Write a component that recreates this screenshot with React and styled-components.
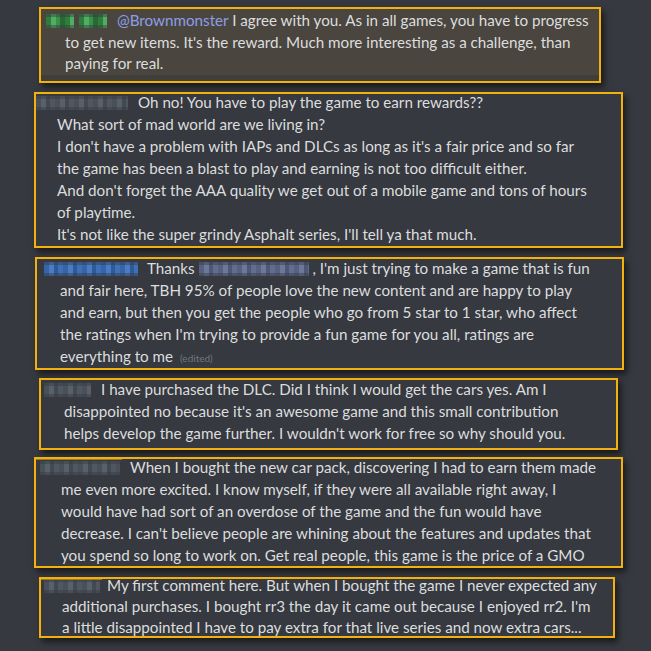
import React from "react";
import styled, { createGlobalStyle } from "styled-components";

const GlobalStyle = createGlobalStyle`
  html, body {
    margin: 0;
    padding: 0;
    background: #36393f;
  }
  body {
    font-family: Lato, "Open Sans", "Noto Sans", sans-serif;
    color: #dcddde;
  }
`;

const Page = styled.div`
  width: 651px;
  height: 651px;
  overflow: hidden;
  background: #36393f;
  display: flex;
  flex-direction: column;
  align-items: flex-start;
`;

const Card = styled.div`
  position: relative;
  box-sizing: border-box;
  margin-top: ${(p) => p.$top}px;
  margin-left: ${(p) => p.$left}px;
  width: ${(p) => p.$width}px;
  height: ${(p) => p.$height}px;
  padding: 0 0 0 ${(p) => p.$pad}px;
  border: 2px solid #f2b10c;
  background: ${(p) => (p.$warm ? "#4a463f" : "#36393f")};
  box-shadow: 3px 4px 6px rgba(0, 0, 0, 0.55);
  overflow: hidden;

  ${(p) =>
    p.$bar &&
    `
    &::before {
      content: "";
      position: absolute;
      left: -1px;
      top: -2px;
      width: ${p.$bar}px;
      height: 3px;
      background: #9c7c1e;
    }
  `}

  ${(p) =>
    p.$warm &&
    `
    &::after {
      content: "";
      position: absolute;
      left: 0;
      right: 0;
      bottom: 0;
      height: 6px;
      background: #403e3a;
    }
  `}
`;

const Body = styled.div`
  margin-top: ${(p) => p.$shift || 0}px;
`;

const Line = styled.div`
  font-size: 15.2px;
  line-height: ${(p) => p.$lh || 22}px;
  white-space: nowrap;
  padding-left: ${(p) => p.$indent || 0}px;
`;

const tones = {
  green: ["#2f7d3c", "#4fae60", "#3a9048", "#276a33"],
  blue: ["#3564a8", "#4a7cc4", "#2e5a99", "#3f70b6"],
  gray: ["#4a5059", "#58606a", "#434951", "#505761"],
  mention: ["#56617f", "#6b789b", "#4d5877", "#616d8e"],
};

const Blur = styled.span`
  display: inline-block;
  vertical-align: -2px;
  width: ${(p) => p.$w}px;
  height: 14px;
  margin-right: ${(p) => p.$gap || 0}px;
  background: linear-gradient(
      180deg,
      rgba(54, 57, 63, 0.45) 0 22%,
      transparent 22% 78%,
      rgba(54, 57, 63, 0.45) 78%
    ),
    repeating-linear-gradient(
      90deg,
      ${(p) => tones[p.$tone][0]} 0 5px,
      ${(p) => tones[p.$tone][1]} 5px 10px,
      ${(p) => tones[p.$tone][2]} 10px 14px,
      ${(p) => tones[p.$tone][3]} 14px 19px
    );
`;

const Mention = styled.span`
  color: #8c9ee6;
`;

const Edited = styled.span`
  font-size: 10px;
  color: #72767d;
  margin-left: 3px;
`;

export default function App() {
  return (
    <Page>
      <GlobalStyle />

      <Card $top={7} $left={39} $width={562} $height={76} $pad={5} $warm>
        <Body $shift={1}>
          <Line $lh={21.5}>
            <Blur $w={28} $tone="green" $gap={5} />
            <Blur $w={28} $tone="green" $gap={10} />
            <Mention>@Brownmonster</Mention> I agree with you. As in all games, you have to progress
          </Line>
          <Line $lh={21.5} $indent={19}>
            to get new items. It's the reward. Much more interesting as a challenge, than
          </Line>
          <Line $lh={21.5} $indent={19}>
            paying for real.
          </Line>
        </Body>
      </Card>

      <Card $top={9} $left={34} $width={589} $height={156} $pad={0}>
        <Body $shift={-3}>
          <Line>
            <Blur $w={92} $tone="gray" $gap={10} />
            Oh no! You have to play the game to earn rewards??
          </Line>
          <Line $indent={21}>What sort of mad world are we living in?</Line>
          <Line $indent={21}>
            I don't have a problem with IAPs and DLCs as long as it's a fair price and so far
          </Line>
          <Line $indent={21}>
            the game has been a blast to play and earning is not too difficult either.
          </Line>
          <Line $indent={21}>
            And don't forget the AAA quality we get out of a mobile game and tons of hours
          </Line>
          <Line $indent={21}>of playtime.</Line>
          <Line $indent={21}>
            It's not like the super grindy Asphalt series, I'll tell ya that much.
          </Line>
        </Body>
      </Card>

      <Card $top={9} $left={35} $width={589} $height={113} $pad={7}>
        <Body $shift={-2}>
          <Line>
            <Blur $w={94} $tone="blue" $gap={9} />
            Thanks <Blur $w={110} $tone="mention" /> , I'm just trying to make a game that is fun
          </Line>
          <Line $indent={16}>
            and fair here, TBH 95% of people love the new content and are happy to play
          </Line>
          <Line $indent={16}>
            and earn, but then you get the people who go from 5 star to 1 star, who affect
          </Line>
          <Line $indent={16}>
            the ratings when I'm trying to provide a fun game for you all, ratings are
          </Line>
          <Line $indent={16}>
            everything to me <Edited>(edited)</Edited>
          </Line>
        </Body>
      </Card>

      <Card $top={8} $left={39} $width={579} $height={72} $pad={3}>
        <Body $shift={-2}>
          <Line>
            <Blur $w={47} $tone="gray" $gap={10} />
            I have purchased the DLC. Did I think I would get the cars yes. Am I
          </Line>
          <Line $indent={20}>
            disappointed no because it's an awesome game and this small contribution
          </Line>
          <Line $indent={20}>
            helps develop the game further. I wouldn't work for free so why should you.
          </Line>
        </Body>
      </Card>

      <Card $top={7} $left={34} $width={589} $height={111} $pad={4} $bar={87}>
        <Body $shift={-3}>
          <Line>
            <Blur $w={80} $tone="gray" $gap={10} />
            When I bought the new car pack, discovering I had to earn them made
          </Line>
          <Line $indent={21}>
            me even more excited. I know myself, if they were all available right away, I
          </Line>
          <Line $indent={21}>
            would have had sort of an overdose of the game and the fun would have
          </Line>
          <Line $indent={21}>
            decrease. I can't believe people are whining about the features and updates that
          </Line>
          <Line $indent={21}>
            you spend so long to work on. Get real people, this game is the price of a GMO
          </Line>
        </Body>
      </Card>

      <Card $top={9} $left={39} $width={576} $height={61} $pad={3} $bar={62}>
        <Body $shift={-4}>
          <Line $lh={21}>
            <Blur $w={56} $tone="gray" $gap={7} />
            My first comment here. But when I bought the game I never expected any
          </Line>
          <Line $lh={21} $indent={18}>
            additional purchases. I bought rr3 the day it came out because I enjoyed rr2. I'm
          </Line>
          <Line $lh={21} $indent={18}>
            a little disappointed I have to pay extra for that live series and now extra cars...
          </Line>
        </Body>
      </Card>
    </Page>
  );
}
